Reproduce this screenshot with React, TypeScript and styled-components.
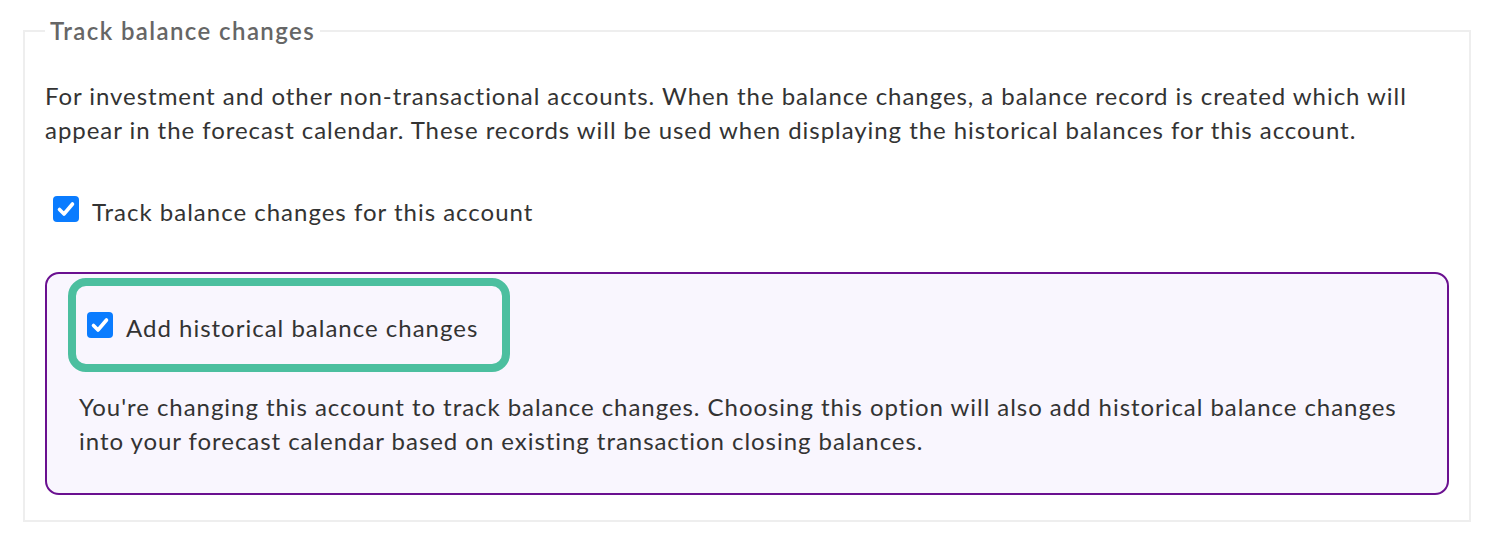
import React from "react";
import styled, { createGlobalStyle } from "styled-components";

const Global = createGlobalStyle`
  html, body { margin: 0; padding: 0; background: #ffffff; }
  body { font-family: Lato, "Open Sans", sans-serif; color: #333333; }
`;

const Page = styled.div`
  padding: 19px 19px 0 23px;
`;

const Fieldset = styled.fieldset`
  margin: 0;
  border: 2px solid #eeeeee;
  padding: 0 20px 25px 20px;
  min-width: 0;
`;

const Legend = styled.legend`
  padding: 0 5px;
  font-size: 24px;
  line-height: 24px;
  font-weight: 600;
  letter-spacing: 1.4px;
  color: #666666;
`;

const Paragraph = styled.p<{ $top: number }>`
  margin: ${(p) => p.$top}px 0 0 0;
  font-size: 24px;
  line-height: 34px;
  letter-spacing: 0.95px;
  color: #333333;
`;

const CheckRow = styled.label<{ $indent: number }>`
  display: flex;
  align-items: flex-start;
  gap: 13px;
  margin-left: ${(p) => p.$indent}px;
  font-size: 24px;
  line-height: 32px;
  letter-spacing: 1px;
  color: #333333;
  cursor: pointer;
`;

const TopRow = styled.div`
  margin-top: 49px;
`;

const Box = styled.span`
  width: 26px;
  height: 26px;
  border-radius: 4px;
  background: #0a7cff;
  display: inline-flex;
  align-items: center;
  justify-content: center;
  flex: none;
`;

const Notice = styled.div`
  margin-top: 44px;
  border: 2px solid #6a1090;
  border-radius: 14px;
  background: #f9f6fe;
  padding: 4px 32px 35px 32px;
`;

const Highlight = styled.div`
  display: inline-flex;
  margin-left: -11px;
  border: 8px solid #4cbf9f;
  border-radius: 18px;
  padding: 26px 24px 20px 11px;
`;

const Check = () => (
  <Box>
    <svg width="26" height="26" viewBox="0 0 26 26" aria-hidden="true">
      <path
        d="M6.5 13.5 L11 18 L19.5 8"
        fill="none"
        stroke="#ffffff"
        strokeWidth="3.6"
        strokeLinecap="round"
        strokeLinejoin="round"
      />
    </svg>
  </Box>
);

export default function App() {
  return (
    <>
      <Global />
      <Page>
        <Fieldset>
          <Legend>Track balance changes</Legend>
          <Paragraph $top={36}>
            For investment and other non-transactional accounts. When the balance changes, a balance record is created which will
            appear in the forecast calendar. These records will be used when displaying the historical balances for this account.
          </Paragraph>
          <TopRow>
            <CheckRow $indent={8}>
              <Check />
              Track balance changes for this account
            </CheckRow>
          </TopRow>
          <Notice>
            <Highlight>
              <CheckRow $indent={0}>
                <Check />
                Add historical balance changes
              </CheckRow>
            </Highlight>
            <Paragraph $top={18}>
              You're changing this account to track balance changes. Choosing this option will also add historical balance changes
              into your forecast calendar based on existing transaction closing balances.
            </Paragraph>
          </Notice>
        </Fieldset>
      </Page>
    </>
  );
}
